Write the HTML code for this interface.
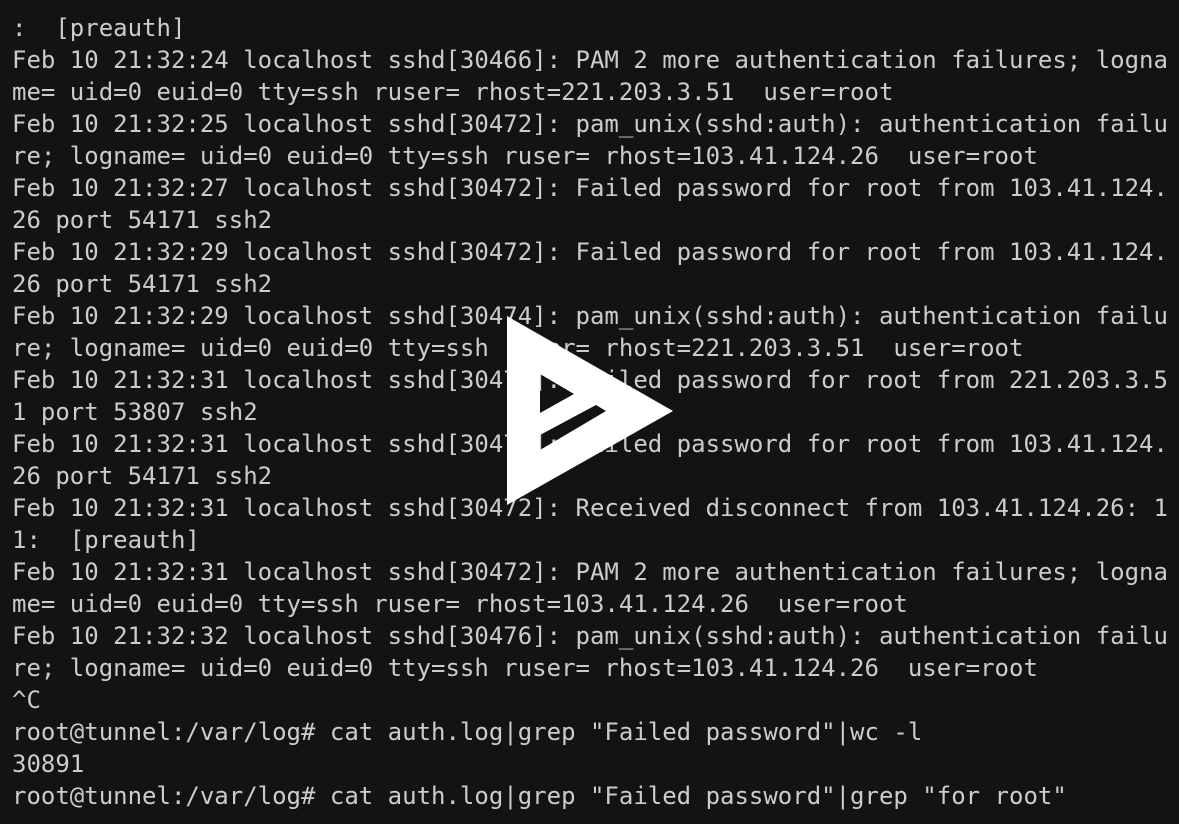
<!DOCTYPE html>
<html><head><meta charset="utf-8"><style>
html,body{margin:0;padding:0;background:#121314;width:1179px;height:824px;overflow:hidden}
pre{margin:0;position:absolute;left:12px;top:12px;font-family:"DejaVu Sans Mono","Liberation Mono",monospace;font-size:24px;line-height:32px;color:#cccccc;white-space:pre}
svg{position:absolute;left:0;top:0}
</style></head><body>
<pre>:  [preauth]
Feb 10 21:32:24 localhost sshd[30466]: PAM 2 more authentication failures; logna
me= uid=0 euid=0 tty=ssh ruser= rhost=221.203.3.51  user=root
Feb 10 21:32:25 localhost sshd[30472]: pam_unix(sshd:auth): authentication failu
re; logname= uid=0 euid=0 tty=ssh ruser= rhost=103.41.124.26  user=root
Feb 10 21:32:27 localhost sshd[30472]: Failed password for root from 103.41.124.
26 port 54171 ssh2
Feb 10 21:32:29 localhost sshd[30472]: Failed password for root from 103.41.124.
26 port 54171 ssh2
Feb 10 21:32:29 localhost sshd[30474]: pam_unix(sshd:auth): authentication failu
re; logname= uid=0 euid=0 tty=ssh ruser= rhost=221.203.3.51  user=root
Feb 10 21:32:31 localhost sshd[30474]: Failed password for root from 221.203.3.5
1 port 53807 ssh2
Feb 10 21:32:31 localhost sshd[30472]: Failed password for root from 103.41.124.
26 port 54171 ssh2
Feb 10 21:32:31 localhost sshd[30472]: Received disconnect from 103.41.124.26: 1
1:  [preauth]
Feb 10 21:32:31 localhost sshd[30472]: PAM 2 more authentication failures; logna
me= uid=0 euid=0 tty=ssh ruser= rhost=103.41.124.26  user=root
Feb 10 21:32:32 localhost sshd[30476]: pam_unix(sshd:auth): authentication failu
re; logname= uid=0 euid=0 tty=ssh ruser= rhost=103.41.124.26  user=root
^C
root@tunnel:/var/log# cat auth.log|grep "Failed password"|wc -l
30891
root@tunnel:/var/log# cat auth.log|grep "Failed password"|grep "for root"</pre>
<svg width="1179" height="824" viewBox="0 0 1179 824">
<path fill="#ffffff" fill-rule="evenodd" d="M507 316 L673 411 L507 505 Z M540 374 L574 394 L540 413 Z M540 435 L596 405 L606 411 L540 450 Z"/>
</svg>
</body></html>
